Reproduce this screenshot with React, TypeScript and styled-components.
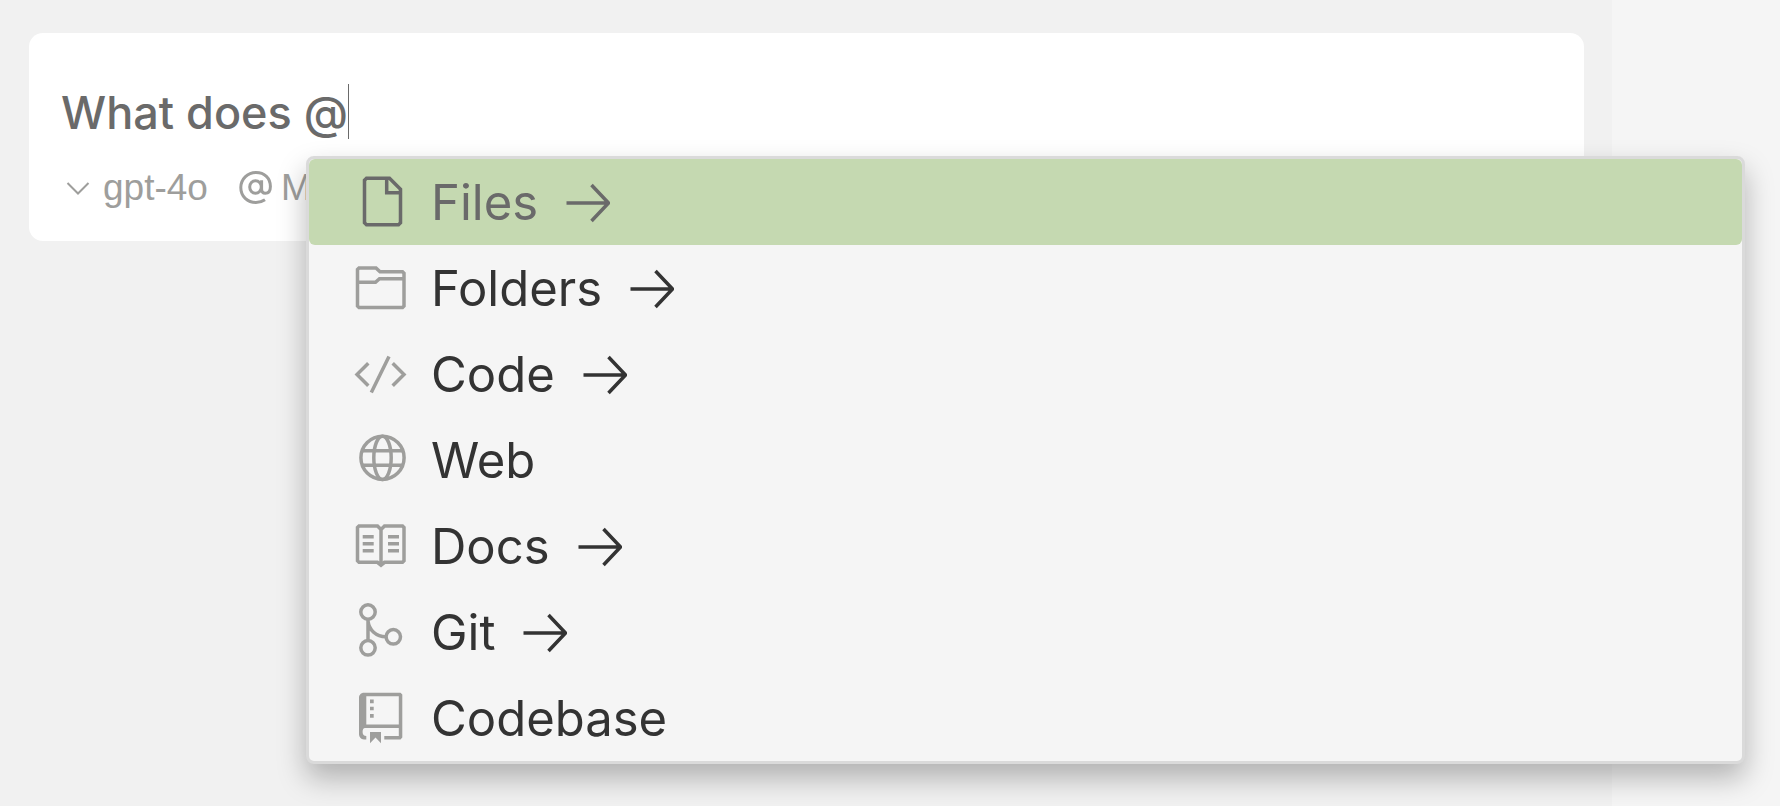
import React from 'react';
import styled, { createGlobalStyle } from 'styled-components';

const GlobalStyle = createGlobalStyle`
  *, *::before, *::after { box-sizing: border-box; }
  body {
    margin: 0;
    background: #f1f1f1;
    font-family: Inter, "Liberation Sans", sans-serif;
  }
`;

const Page = styled.div`
  position: relative;
  display: grid;
  grid-template-columns: minmax(0, 1fr) 168px;
  min-height: 100vh;
  overflow: hidden;
`;

const ChatPane = styled.main`
  padding: 33px 28px 0 29px;
  background: #f1f1f1;
`;

const EditorPane = styled.aside`
  background: #f5f5f5;
`;

const Composer = styled.form`
  display: flex;
  flex-direction: column;
  gap: 25px;
  height: 208px;
  padding: 51px 32px 0;
  border-radius: 14px;
  background: #ffffff;
`;

const PromptLine = styled.div`
  display: flex;
  align-items: center;
  height: 55px;
`;

const PromptInput = styled.input`
  field-sizing: content;
  padding: 2px 0 0;
  border: 0;
  outline: 0;
  background: transparent;
  color: #6a6a6a;
  font: 500 45px/55px Inter, "Liberation Sans", sans-serif;
`;

const Caret = styled.span`
  width: 1px;
  height: 55px;
  background: #6a6a6a;
`;

const Toolbar = styled.div`
  display: flex;
  align-items: center;
  gap: 31px;
  height: 48px;
`;

const ToolButton = styled.button`
  display: flex;
  align-items: center;
  gap: 8px;
  padding: 0;
  border: 0;
  background: transparent;
  color: #9e9e9c;
  font: 400 37px/48px "Liberation Sans", Arial, sans-serif;
  white-space: nowrap;
`;

const ToolIcon = styled.svg`
  flex: none;
  width: 34px;
  height: 34px;
  fill: none;
  stroke: currentColor;
`;

const Menu = styled.div`
  position: absolute;
  top: 156px;
  left: 306px;
  right: 35px;
  border: 3px solid #dadada;
  border-radius: 8px;
  background: #f5f5f5;
  box-shadow: 0 14px 29px rgba(0, 0, 0, 0.27);
`;

const MenuItem = styled.button<{ $active?: boolean }>`
  display: flex;
  align-items: center;
  width: 100%;
  height: 86px;
  padding: 0 43px;
  border: 0;
  border-radius: 6px;
  background: ${(p) => (p.$active ? '#c5d9b1' : 'transparent')};
  color: ${(p) => (p.$active ? '#6a6a6a' : '#333333')};
  font: 400 49px/84px Inter, "Liberation Sans", sans-serif;
  text-align: left;
`;

const ItemLabel = styled.span`
  padding-top: 2px;
`;

const ItemIcon = styled.svg<{ $active?: boolean }>`
  flex: none;
  width: 57px;
  height: 57px;
  margin-right: 22px;
  overflow: visible;
  fill: none;
  stroke: currentColor;
  stroke-width: 3.5;
  color: ${(p) => (p.$active ? '#6a6a6a' : '#9e9e9c')};
`;

const ArrowIcon = styled.svg`
  flex: none;
  width: 44px;
  height: 44px;
  margin-left: 28px;
  fill: none;
  stroke: currentColor;
  stroke-width: 3.5;
`;

const FileGlyph = () => (
  <path d="M14.5 4.3H37.5L48.5 15.3V48.7L46.5 50.7H14.5L12.5 48.7V6.3ZM34.7 4.3V18.8H48.5" />
);

const FolderGlyph = () => (
  <path d="M5.5 9.5L7 8H24L28 11.8H50.5L52 13.3V46L50.5 47.5H7L5.5 46ZM5.5 22.2H23.5L27.5 18.7H52" />
);

const CodeGlyph = () => (
  <path d="M16.3 17.2L5 28.5L16.3 39.8M37 10.5L19.3 46.5M40.7 17.2L52 28.5L40.7 39.8" />
);

const GlobeGlyph = () => (
  <>
    <circle cx="30.5" cy="25.8" r="21.6" />
    <ellipse cx="30.5" cy="25.8" rx="8.7" ry="21.6" />
    <path d="M10.5 18.8H50.5M10.5 33.2H50.5" />
  </>
);

const BookGlyph = () => (
  <>
    <path d="M5.5 9.5L7 8H25.5L29 11.5L32.5 8H50.5L52 9.5V42.8L50.5 44.3H32.5L29 47.3L25.5 44.3H7L5.5 42.8ZM29 11V46" />
    <path d="M10.7 18.8H21.7M10.7 25.8H21.7M10.7 32.8H21.7M36 18.8H47M36 25.8H47M36 32.8H47" />
  </>
);

const GitGlyph = () => (
  <>
    <circle cx="16" cy="8" r="7.2" />
    <circle cx="16" cy="43.8" r="7.2" />
    <circle cx="41.3" cy="32.8" r="7.2" />
    <path d="M16 15.5V37M16 17C17 26 24 32.8 34 32.8" />
  </>
);

const RepoGlyph = () => (
  <>
    <path
      fill="currentColor"
      stroke="none"
      fillRule="evenodd"
      d="M12 2.8H48.5L50.3 4.6V47.6L48.5 49.4H32.3V46H46.8V38H13C11.5 38 10.6 39.5 10.6 42C10.6 44.5 12 46 14.3 46V49.4H12C9 49.4 7 47 7 44V8C7 5 9 2.8 12 2.8ZM14.3 6.3V34.6H46.8V6.3Z"
    />
    <path
      fill="currentColor"
      stroke="none"
      d="M18 42H29V53.2L23.5 47.5L18 53.2ZM18 9.5H21.7V13.2H18ZM18 16.7H21.7V20.3H18ZM18 24H21.7V27.7H18Z"
    />
  </>
);

type Entry = { label: string; Glyph: React.FC; nested?: boolean };

const entries: Entry[] = [
  { label: 'Files', Glyph: FileGlyph, nested: true },
  { label: 'Folders', Glyph: FolderGlyph, nested: true },
  { label: 'Code', Glyph: CodeGlyph, nested: true },
  { label: 'Web', Glyph: GlobeGlyph },
  { label: 'Docs', Glyph: BookGlyph, nested: true },
  { label: 'Git', Glyph: GitGlyph, nested: true },
  { label: 'Codebase', Glyph: RepoGlyph },
];

export default function App() {
  return (
    <>
      <GlobalStyle />
      <Page>
        <ChatPane>
          <Composer onSubmit={(e) => e.preventDefault()}>
            <PromptLine>
              <PromptInput aria-label="Prompt" defaultValue="What does @" />
              <Caret />
            </PromptLine>
            <Toolbar>
              <ToolButton type="button">
                <ToolIcon viewBox="0 0 34 34" strokeWidth="2" aria-hidden="true">
                  <path d="M6.5 12L17 22.5L27.5 12" />
                </ToolIcon>
                gpt-4o
              </ToolButton>
              <ToolButton type="button">
                <ToolIcon viewBox="0 0 34 34" strokeWidth="3" aria-hidden="true">
                  <ellipse cx="16.5" cy="16" rx="5.8" ry="6.3" />
                  <path d="M22.6 9.3V18C22.6 20.8 24 22.3 26.3 22.3C29.6 22.3 31.4 19.5 31.4 15.5C31.4 7 25.5 1.5 17 1.5C8.5 1.5 1.8 8 1.8 16.5C1.8 25.5 8.5 31.5 17 31.5C20.5 31.5 23.5 30.5 26 28.8" />
                </ToolIcon>
                Mention
              </ToolButton>
            </Toolbar>
          </Composer>
        </ChatPane>
        <EditorPane />
        <Menu role="menu" aria-label="Mention">
          {entries.map(({ label, Glyph, nested }, i) => (
            <MenuItem key={label} type="button" role="menuitem" $active={i === 0}>
              <ItemIcon viewBox="0 0 57 57" $active={i === 0} aria-hidden="true">
                <Glyph />
              </ItemIcon>
              <ItemLabel>{label}</ItemLabel>
              {nested && (
                <ArrowIcon viewBox="0 0 44 44" aria-hidden="true">
                  <path d="M0.5 23H42M25.5 5L42.5 23L25.5 41" />
                </ArrowIcon>
              )}
            </MenuItem>
          ))}
        </Menu>
      </Page>
    </>
  );
}
